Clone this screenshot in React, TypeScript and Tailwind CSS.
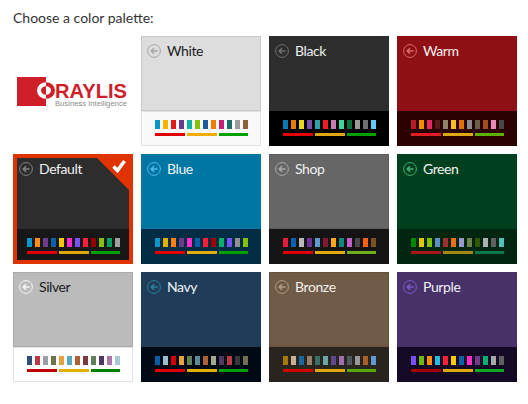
const bars3 = "flex gap-[2px] mt-[4px]";

type Palette = {
  name: string;
  top: string;
  bottom: string;
  text: string;
  icon: string;
  swatches: string[];
  bars: string[];
};

const palettes: Palette[] = [
  {
    name: "White",
    top: "bg-[#dddddd] shadow-[inset_0_0_0_1px_#c8c8c8]",
    bottom: "bg-[#f9f9f9] shadow-[inset_0_0_0_1px_#e2e2e2]",
    text: "text-[#1c1c1c]",
    icon: "text-[#a8a8a8]",
    swatches: ["bg-[#0a96c4]", "bg-[#f5b400]", "bg-[#e31a1c]", "bg-[#6b3a8c]", "bg-[#0fb3a3]", "bg-[#84c20c]", "bg-[#1f5a9c]", "bg-[#f07d00]", "bg-[#c81e78]", "bg-[#1a6e66]", "bg-[#9a9c9e]", "bg-[#8c6238]"],
    bars: ["bg-[#e00000]", "bg-[#f0ac00]", "bg-[#00a000]"],
  },
  {
    name: "Black",
    top: "bg-[#2d2d2d]",
    bottom: "bg-[#000000]",
    text: "text-[#f0f0f0]",
    icon: "text-[#6e6e6e]",
    swatches: ["bg-[#0a78b4]", "bg-[#e87a10]", "bg-[#e8d820]", "bg-[#7a50a8]", "bg-[#30a0a8]", "bg-[#ee1c24]", "bg-[#c87ab4]", "bg-[#40d4a0]", "bg-[#0a7038]", "bg-[#9a9a9c]", "bg-[#6e6e6e]", "bg-[#60ccf8]"],
    bars: ["bg-[#e00000]", "bg-[#e0a810]", "bg-[#00a000]"],
  },
  {
    name: "Warm",
    top: "bg-[#8e1014]",
    bottom: "bg-[#2b0202]",
    text: "text-[#f5f0f0]",
    icon: "text-[#d86a6e]",
    swatches: ["bg-[#b81c24]", "bg-[#f09000]", "bg-[#e82860]", "bg-[#5a1818]", "bg-[#908468]", "bg-[#f5c020]", "bg-[#e07008]", "bg-[#8c8c90]", "bg-[#686048]", "bg-[#a05020]", "bg-[#e888b8]", "bg-[#484848]"],
    bars: ["bg-[#e01c24]", "bg-[#e0a810]", "bg-[#60b000]"],
  },
  {
    name: "Default",
    top: "bg-[#2d2d2d]",
    bottom: "bg-[#171717]",
    text: "text-[#f0f0f0]",
    icon: "text-[#808080]",
    swatches: ["bg-[#0a96c8]", "bg-[#ff8c14]", "bg-[#6e3a8c]", "bg-[#0a60a8]", "bg-[#f5c800]", "bg-[#ff2cc8]", "bg-[#7850f8]", "bg-[#ff2038]", "bg-[#980000]", "bg-[#84c00c]", "bg-[#00a060]", "bg-[#a0a0a0]"],
    bars: ["bg-[#e00000]", "bg-[#dca80c]", "bg-[#00a000]"],
  },
  {
    name: "Blue",
    top: "bg-[#0076a3]",
    bottom: "bg-[#002c44]",
    text: "text-[#f0f6fa]",
    icon: "text-[#4db8e8]",
    swatches: ["bg-[#0a96c8]", "bg-[#e0b000]", "bg-[#ff8010]", "bg-[#6e3a8c]", "bg-[#ff2cc8]", "bg-[#0a60a8]", "bg-[#ff2038]", "bg-[#a00000]", "bg-[#00b070]", "bg-[#7850f8]", "bg-[#909090]", "bg-[#84c00c]"],
    bars: ["bg-[#e00000]", "bg-[#e0ac10]", "bg-[#00a000]"],
  },
  {
    name: "Shop",
    top: "bg-[#666666] shadow-[inset_0_0_0_1px_#5c5c5c]",
    bottom: "bg-[#141414]",
    text: "text-[#f0f0f0]",
    icon: "text-[#a8a8a8]",
    swatches: ["bg-[#e81840]", "bg-[#0a60b0]", "bg-[#b8b8b8]", "bg-[#6e3098]", "bg-[#6098d0]", "bg-[#801830]", "bg-[#f8a818]", "bg-[#108880]", "bg-[#c060c8]", "bg-[#484848]", "bg-[#ff6010]", "bg-[#7c5020]"],
    bars: ["bg-[#e00000]", "bg-[#e0ac10]", "bg-[#70b020]"],
  },
  {
    name: "Green",
    top: "bg-[#01401e]",
    bottom: "bg-[#002510]",
    text: "text-[#f0f5f2]",
    icon: "text-[#3fae74]",
    swatches: ["bg-[#008800]", "bg-[#e0c800]", "bg-[#80c000]", "bg-[#5890c8]", "bg-[#a03030]", "bg-[#f06c18]", "bg-[#9898d0]", "bg-[#6c8048]", "bg-[#305800]", "bg-[#b0b0b0]", "bg-[#606060]", "bg-[#50c0b8]"],
    bars: ["bg-[#a81818]", "bg-[#a08818]", "bg-[#087848]"],
  },
  {
    name: "Silver",
    top: "bg-[#bbbbbb] shadow-[inset_0_0_0_1px_#aaaaaa]",
    bottom: "bg-[#ffffff] shadow-[inset_0_0_0_1px_#e2e2e2]",
    text: "text-[#1c1c1c]",
    icon: "text-[#f4f4f4]",
    swatches: ["bg-[#304e78]", "bg-[#b83a48]", "bg-[#98a0a8]", "bg-[#707050]", "bg-[#e8a040]", "bg-[#58a8c0]", "bg-[#b06030]", "bg-[#803840]", "bg-[#608058]", "bg-[#503860]", "bg-[#a878a8]", "bg-[#a8c8d8]"],
    bars: ["bg-[#c00000]", "bg-[#e0b000]", "bg-[#008000]"],
  },
  {
    name: "Navy",
    top: "bg-[#1f3d58]",
    bottom: "bg-[#000a14]",
    text: "text-[#f0f4f8]",
    icon: "text-[#2a7f9e]",
    swatches: ["bg-[#0060a8]", "bg-[#98c0d0]", "bg-[#d00000]", "bg-[#e8a040]", "bg-[#608058]", "bg-[#608898]", "bg-[#b06030]", "bg-[#a0a890]", "bg-[#503860]", "bg-[#b83a48]", "bg-[#383838]", "bg-[#707050]"],
    bars: ["bg-[#e00000]", "bg-[#e0b000]", "bg-[#00a000]"],
  },
  {
    name: "Bronze",
    top: "bg-[#6f5b48] shadow-[inset_0_0_0_1px_#665238]",
    bottom: "bg-[#2a241e]",
    text: "text-[#f4f0ec]",
    icon: "text-[#b09a80]",
    swatches: ["bg-[#a87800]", "bg-[#c8b098]", "bg-[#1868a0]", "bg-[#988068]", "bg-[#387068]", "bg-[#68a8a0]", "bg-[#604890]", "bg-[#a070b0]", "bg-[#505860]", "bg-[#989898]", "bg-[#a86028]", "bg-[#6098d0]"],
    bars: ["bg-[#d00000]", "bg-[#e0a810]", "bg-[#58a808]"],
  },
  {
    name: "Purple",
    top: "bg-[#473168]",
    bottom: "bg-[#150a26]",
    text: "text-[#f2f0f6]",
    icon: "text-[#7a5cc8]",
    swatches: ["bg-[#7850f8]", "bg-[#70b800]", "bg-[#ff8c08]", "bg-[#28b8e0]", "bg-[#ff2038]", "bg-[#f8c800]", "bg-[#0a60a8]", "bg-[#ff2cc8]", "bg-[#6e3a8c]", "bg-[#00b070]", "bg-[#a8a8a8]", "bg-[#606060]"],
    bars: ["bg-[#a80000]", "bg-[#e0a810]", "bg-[#10a820]"],
  },
];

function BackIcon({ className }: { className: string }) {
  return (
    <svg width="14" height="14" viewBox="0 0 14 14" fill="none" stroke="currentColor" className={className}>
      <circle cx="7" cy="7" r="6.4" strokeWidth="1" />
      <path d="M10.6 7H4.2M7 4.2L4.2 7L7 9.8" strokeWidth="1.6" />
    </svg>
  );
}

function Logo() {
  return (
    <div className="flex h-full items-center pl-[4px] pt-[1px]">
      <svg width="116" height="32" viewBox="0 0 116 32">
        <defs>
          <clipPath id="logo-left">
            <rect x="0" y="0" width="29" height="32" />
          </clipPath>
          <clipPath id="logo-right">
            <rect x="29" y="0" width="20" height="32" />
          </clipPath>
        </defs>
        <rect x="0" y="1" width="29" height="29" fill="#cf2029" />
        <ellipse cx="29" cy="14.5" rx="7" ry="6.2" fill="none" stroke="#ffffff" strokeWidth="4" clipPath="url(#logo-left)" />
        <ellipse cx="29" cy="14.5" rx="7" ry="6.2" fill="none" stroke="#cf2029" strokeWidth="4" clipPath="url(#logo-right)" />
        <text x="38" y="22" textLength="72" lengthAdjust="spacingAndGlyphs" fill="#cf2029" fontSize="21" fontWeight="700" fontFamily="'Liberation Sans', sans-serif">
          RAYLIS
        </text>
        <text x="38" y="30" textLength="72" lengthAdjust="spacingAndGlyphs" fill="#8c8c8c" fontSize="7" fontFamily="'Liberation Sans', sans-serif">
          Business Intelligence
        </text>
      </svg>
    </div>
  );
}

function Tile({ palette }: { palette: Palette }) {
  const selected = palette.name === "Default";
  return (
    <div className="relative flex h-[110px] flex-col">
      <div className={`flex h-[75px] items-start pl-[6px] pt-[8px] ${palette.top}`}>
        <div className="flex h-[14px] items-center gap-[6px]">
          <BackIcon className={palette.icon} />
          <span className={`text-[14px] leading-[14px] tracking-[-0.4px] ${palette.text}`}>{palette.name}</span>
        </div>
      </div>
      <div className={`flex-1 pl-[14px] pt-[9px] ${palette.bottom}`}>
        <div className="flex gap-[3px]">
          {palette.swatches.map((s, i) => (
            <div key={i} className={`h-[9px] w-[5px] ${s}`} />
          ))}
        </div>
        <div className={bars3}>
          <div className={`h-[3px] w-[30px] ${palette.bars[0]}`} />
          <div className={`h-[3px] w-[30px] ${palette.bars[1]}`} />
          <div className={`h-[3px] w-[29px] ${palette.bars[2]}`} />
        </div>
      </div>
      {selected && (
        <>
          <div className="absolute inset-0 border-4 border-[#e03400]" />
          <svg width="36" height="36" viewBox="0 0 36 36" className="absolute right-[4px] top-[4px]">
            <path d="M4 0H36V32Z" fill="#e03400" />
            <path d="M20.5 8.5L24.5 12.5L31.5 3" fill="none" stroke="#ffffff" strokeWidth="3.6" />
          </svg>
        </>
      )}
    </div>
  );
}

export default function App() {
  return (
    <div className="h-[404px] w-[528px] bg-white pl-[13px] pt-[8px] font-['Lato',sans-serif]">
      <p className="h-[28px] text-[14px] leading-[19px] text-[#333333]">Choose a color palette:</p>
      <div className="grid w-[504px] grid-cols-[repeat(4,120px)] gap-[8px]">
        <Logo />
        {palettes.map((p) => (
          <Tile key={p.name} palette={p} />
        ))}
      </div>
    </div>
  );
}
